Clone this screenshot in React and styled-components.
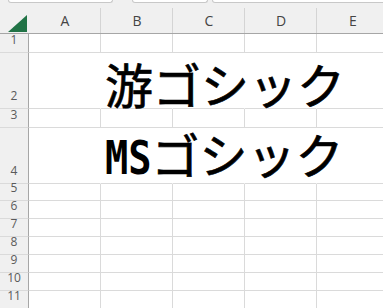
import React from "react";
import styled, { createGlobalStyle } from "styled-components";

const Global = createGlobalStyle`
  html, body { margin: 0; padding: 0; background: #ffffff; overflow: hidden; }
  #root { width: 383px; height: 308px; overflow: hidden; }
`;

const Sheet = styled.div`
  width: 383px;
  height: 308px;
  overflow: hidden;
  background: #ffffff;
  display: flex;
  flex-direction: column;
`;

const FormulaStrip = styled.div`
  height: 4px;
  flex: 0 0 4px;
  background: #f0f0f0;
  display: flex;
  align-items: flex-start;
  padding-left: 8px;
`;

const FieldBox = styled.div`
  height: 2px;
  width: ${(p) => (p.$width ? p.$width + "px" : "auto")};
  flex: ${(p) => (p.$grow ? "1 0 auto" : "0 0 auto")};
  margin-left: ${(p) => p.$ml || 0}px;
  margin-right: ${(p) => (p.$grow ? -8 : 0)}px;
  background: #ffffff;
  border: 1px solid #c8c8c8;
  border-top: none;
  border-radius: 0 0 4px 4px;
`;

const Grid = styled.div`
  display: grid;
  grid-template-columns: 29px repeat(5, 72px);
  grid-template-rows: 30px ${(p) => p.$rows.map((h) => h + "px").join(" ")};
  width: 400px;
`;

const Corner = styled.div`
  background: #f0f0f0;
  border-bottom: 1px solid #a6a6a6;
  position: relative;
`;

const Triangle = styled.svg`
  position: absolute;
  left: 8px;
  top: 11px;
`;

const ColHead = styled.div`
  background: #f0f0f0;
  border-bottom: 1px solid #a6a6a6;
  position: relative;
  display: flex;
  align-items: flex-start;
  justify-content: center;
  padding-top: 9px;
  box-sizing: border-box;
  font-family: "Open Sans", "Liberation Sans", sans-serif;
  font-size: 14px;
  line-height: 16px;
  color: #444444;
  &::after {
    content: "";
    position: absolute;
    right: 0;
    top: 4px;
    bottom: 0;
    width: 1px;
    background: #d4d4d4;
  }
`;

const RowHead = styled.div`
  background: #f0f0f0;
  border-right: 1px solid #a6a6a6;
  border-bottom: 1px solid #dadada;
  display: flex;
  align-items: flex-end;
  justify-content: center;
  box-sizing: border-box;
  padding-bottom: 6px;
  font-family: "Open Sans", "Liberation Sans", sans-serif;
  font-size: 12px;
  line-height: 12px;
  color: #5a5a5a;
`;

const Cell = styled.div`
  border-bottom: 1px solid #dadada;
  border-right: ${(p) => (p.$open ? "1px solid transparent" : "1px solid #dadada")};
  box-sizing: border-box;
  position: relative;
  min-width: 0;
`;

const BigText = styled.div`
  position: relative;
  z-index: 1;
  height: 100%;
  display: flex;
  align-items: flex-end;
  padding-left: 4px;
  padding-bottom: ${(p) => p.$pb}px;
  box-sizing: border-box;
  white-space: nowrap;
  font-family: "Noto Sans CJK JP", "Noto Sans CJK SC", sans-serif;
  font-size: 48px;
  line-height: 48px;
  font-weight: 400;
  color: #000000;
  -webkit-text-stroke: 0.7px #000000;
`;

const Line = styled.span`
  display: block;
`;

const Narrow = styled.span`
  display: inline-block;
  font-family: "DejaVu Sans Mono", "Liberation Mono", monospace;
  font-weight: 700;
  font-size: 46px;
  transform: scaleX(0.84);
  transform-origin: left bottom;
  margin-right: -9px;
  -webkit-text-stroke: 0;
`;

const columns = ["A", "B", "C", "D", "E"];
const rowHeights = [19, 56, 19, 56, 17, 18, 18, 18, 18, 18, 18];

const content = {
  1: { text: <Line>游ゴシック</Line>, pb: 1 },
  3: {
    text: (
      <Line>
        <Narrow>MS</Narrow>ゴシック
      </Line>
    ),
    pb: 1,
  },
};

export default function App() {
  return (
    <>
      <Global />
      <Sheet>
        <FormulaStrip>
          <FieldBox $width={103} />
          <FieldBox $width={74} $ml={19} />
          <FieldBox $grow $ml={4} />
        </FormulaStrip>
        <Grid $rows={rowHeights}>
          <Corner>
            <Triangle width="19" height="17" viewBox="0 0 19 17">
              <polygon points="0,17 19,0 19,17" fill="#217346" />
            </Triangle>
          </Corner>
          {columns.map((c) => (
            <ColHead key={c}>{c}</ColHead>
          ))}
          {rowHeights.map((h, r) => {
            const item = content[r];
            return (
              <React.Fragment key={r}>
                <RowHead>{r + 1}</RowHead>
                {columns.map((c, ci) => (
                  <Cell key={c} $open={!!item}>
                    {item && ci === 1 ? (
                      <BigText $pb={item.pb}>{item.text}</BigText>
                    ) : null}
                  </Cell>
                ))}
              </React.Fragment>
            );
          })}
        </Grid>
      </Sheet>
    </>
  );
}
